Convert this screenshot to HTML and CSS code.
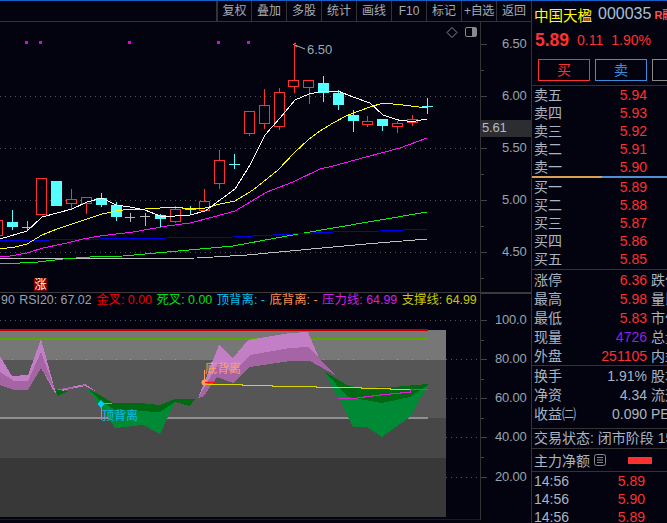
FILE: index.html
```html
<!DOCTYPE html>
<html lang="zh-CN">
<head>
<meta charset="utf-8">
<title>中国天楹 000035</title>
<link rel="stylesheet" href="styles.css">
</head>
<body>
<div class="app">
  <main class="main">
    <nav class="toolbar">
      <span class="tool">复权</span><span class="tool">叠加</span><span class="tool">多股</span><span class="tool">统计</span><span class="tool">画线</span><span class="tool">F10</span><span class="tool">标记</span><span class="tool tight">+自选</span><span class="tool">返回</span>
    </nav>
    <section class="pane price-pane">
      <svg class="plot" viewBox="0 22 480 270" width="480" height="270">
        <g class="grid">
          <line x1="0" x2="480" y1="96.5" y2="96.5"/><line x1="0" x2="480" y1="148.5" y2="148.5"/><line x1="0" x2="480" y1="200.5" y2="200.5"/><line x1="0" x2="480" y1="252.5" y2="252.5"/>
        </g>
        <g class="marks">
          <rect x="25" y="41" width="3" height="3"/><rect x="39" y="41" width="3" height="3"/><rect x="128" y="41" width="3" height="3"/><rect x="217" y="41" width="3" height="3"/><rect x="247" y="41" width="3" height="3"/>
        </g>
        <g class="hi">
          <path d="M293.5 44.5 L297 47 M293.5 44.5 L296 43 M293.5 44.5 L305 49"/>
          <text x="307" y="54">6.50</text>
        </g>
        <g class="ma">
          <polyline class="ma-gray" points="0,259 197,258 247,255 333,247 366,244 427,239"/>
          <polyline class="ma-green" points="0,264 20,263 38,262 63,259 90,257 123,256 167,252 233,246 287,236 333,228 380,220 427,212"/>
          <polyline class="ma-blue" points="0,241 100,239 167,238 233,237 333,232 380,231 427,229"/>
          <polyline class="ma-magenta" points="0,257 10,256 27,253 43,248 67,243 83,239 100,236 133,232 167,226 190,223 213,217 235,211 267,192 293,182 320,169 333,166 366,157 400,148 427,138"/>
        </g>
        <g class="candles">
          <path class="wick-up" d="M71.5 189V210 M86.5 203V214 M175.5 206V223 M204.5 189V211 M219.5 150V189 M249.5 134V136 M264.5 89V129 M279.5 88V130 M294.5 44V93 M309.5 88V104 M367.5 116V127 M397.5 121V133 M412.5 115V126"/>
          <path class="wick-dn" d="M12.5 210V230 M101.5 193V207 M116.5 202V221 M160.5 214V227 M190.5 206V214 M234.5 154V169 M323.5 76V102 M338.5 90V110 M353.5 110V132 M382.5 119V131 M427.5 98V114 M185 209.5H196 M229 164.5H240 M422 106.5H433"/>
          <path class="wick-flat" d="M27.5 221V230 M22 227.5H32 M130.5 213V222 M125 217.5H135 M145.5 213V226 M140 216.5H150"/>
          <rect class="up" x="-4.5" y="220.5" width="7" height="15"/>
          <rect class="up" x="36.5" y="178.5" width="10" height="36"/>
          <rect class="up" x="66.5" y="199.5" width="10" height="4"/>
          <rect class="up" x="81.5" y="197.5" width="10" height="6"/>
          <rect class="up" x="170.5" y="209.5" width="10" height="12"/>
          <rect class="up" x="199.5" y="201.5" width="10" height="9"/>
          <rect class="up" x="214.5" y="160.5" width="10" height="23"/>
          <rect class="up" x="244.5" y="111.5" width="10" height="22"/>
          <rect class="up" x="259.5" y="105.5" width="10" height="18"/>
          <rect class="up" x="274.5" y="92.5" width="10" height="34"/>
          <rect class="up" x="288.5" y="80.5" width="10" height="6"/>
          <rect class="up" x="303.5" y="80.5" width="10" height="7"/>
          <rect class="up" x="362.5" y="121.5" width="10" height="3"/>
          <rect class="up" x="392.5" y="123.5" width="10" height="3"/>
          <rect class="up" x="407.5" y="119.5" width="10" height="3"/>
          <rect class="dn" x="7" y="222" width="11" height="5"/>
          <rect class="dn" x="51" y="181" width="11" height="25"/>
          <rect class="dn" x="96" y="198" width="11" height="7"/>
          <rect class="dn" x="111" y="205" width="11" height="12"/>
          <rect class="dn" x="155" y="215" width="11" height="4"/>
          <rect class="dn" x="318" y="83" width="11" height="10"/>
          <rect class="dn" x="333" y="93" width="11" height="12"/>
          <rect class="dn" x="348" y="115" width="11" height="6"/>
          <rect class="dn" x="377" y="119" width="11" height="7"/>
        </g>
        <g class="ma">
          <polyline class="ma-yellow" points="0,249 15,247 27,244 42,235 57,229 72,224 87,219 102,214 116,211 130,209 145,209 160,208 175,207 190,209 205,208 220,204 235,201 253,190 278,170 295,152 308,140 320,131 333,123 348,115 370,107 383,103 403,105 427,108"/>
          <polyline class="ma-white" points="0,239 27,231 42,217 57,213 72,209 87,202 102,198 116,205 130,207 145,210 160,216 175,216 190,215 205,211 220,200 235,189 250,165 265,135 280,118 295,100 309,94 323,91 338,91 353,97 370,103 383,115 400,120.5 413,121.5 427,119"/>
        </g>
        <g class="badge">
          <rect x="34" y="278" width="13" height="13"/>
          <text x="40.5" y="289">涨</text>
        </g>
        <path class="tool-icon" d="M452 27.5 L457 32.5 L452 37.5 L447 32.5 Z"/>
        <g class="tool-icon">
          <rect x="465.5" y="27.5" width="11" height="9" rx="1.5"/>
          <rect class="solid" x="472" y="28" width="4" height="8"/>
        </g>
      </svg>
      <svg class="axis" viewBox="481 22 50 270" width="50" height="270">
        <g class="ticks">
          <path d="M481 44.5H487 M481 70.5H484 M481 96.5H487 M481 122.5H484 M481 148.5H487 M481 174.5H484 M481 200.5H487 M481 226.5H484 M481 252.5H487 M481 278.5H484"/>
        </g>
        <text x="502" y="48">6.50</text>
        <text x="502" y="100">6.00</text>
        <text x="502" y="152">5.50</text>
        <text x="502" y="204">5.00</text>
        <text x="502" y="256">4.50</text>
        <rect class="cursor-box" x="481" y="120" width="50" height="17"/>
        <text class="cursor-text" x="482" y="132">5.61</text>
      </svg>
    </section>
    <section class="pane ind-pane">
      <div class="ind-left">
        <div class="legend">
          <span class="c-grey">90</span>
          <span class="c-grey">RSI20: 67.02</span>
          <span class="c-red">金叉: 0.00</span>
          <span class="c-green">死叉: 0.00</span>
          <span class="c-cyan">顶背离: -</span>
          <span class="c-orange">底背离: -</span>
          <span class="c-magenta">压力线: 64.99</span>
          <span class="c-olive">支撑线: 64.99</span>
        </div>
        <svg class="plot" viewBox="0 309 480 211" width="480" height="211">
          <g class="grid">
            <line x1="0" x2="480" y1="320.5" y2="320.5"/><line x1="446" x2="480" y1="359.5" y2="359.5"/><line x1="446" x2="480" y1="398.5" y2="398.5"/><line x1="446" x2="480" y1="437.5" y2="437.5"/><line x1="446" x2="480" y1="477.5" y2="477.5"/>
          </g>
          <rect class="band-a" x="0" y="330" width="446" height="30"/>
          <rect class="band-b" x="0" y="360" width="446" height="58"/>
          <rect class="band-c" x="0" y="418" width="446" height="40"/>
          <rect class="band-d" x="0" y="458" width="446" height="59"/>
          <line class="lvl-red" x1="0" x2="428" y1="330" y2="330"/>
          <line class="lvl-green" x1="0" x2="428" y1="339" y2="339"/>
          <line class="lvl-white" x1="0" x2="428" y1="418" y2="418"/>
          <g class="dots">
            <rect x="12" y="359" width="1" height="1"/><rect x="34" y="359" width="1" height="1"/><rect x="56" y="359" width="1" height="1"/><rect x="71" y="359" width="1" height="1"/><rect x="86" y="359" width="1" height="1"/><rect x="101" y="359" width="1" height="1"/><rect x="116" y="359" width="1" height="1"/><rect x="130" y="359" width="1" height="1"/><rect x="145" y="359" width="1" height="1"/><rect x="160" y="359" width="1" height="1"/><rect x="175" y="359" width="1" height="1"/><rect x="190" y="359" width="1" height="1"/><rect x="323" y="359" width="1" height="1"/><rect x="338" y="359" width="1" height="1"/><rect x="353" y="359" width="1" height="1"/><rect x="382" y="359" width="1" height="1"/><rect x="397" y="359" width="1" height="1"/><rect x="412" y="359" width="1" height="1"/><rect x="427" y="359" width="1" height="1"/>
          </g>
          <g class="areas">
            <polygon class="pur-l" points="0,356 12,376 28,375 41,339 55,390 70,387 85,384 97,392 85,386 70,389 55,393 41,368 28,390 14,390 0,385"/>
            <polygon class="pur-l" points="198,398 219,345 233,358 248,340 290,333 308,332 319,358 335,375 310,361 290,361 250,367 233,383 217,377 204,396"/>
            <polygon class="pur-d" points="0,372 14,381 28,381 41,352 55,390 41,368 28,390 14,390 0,385"/>
            <polygon class="pur-d" points="55,390 70,387 85,386 85,384 70,389"/>
            <polygon class="pur-d" points="198,398 219,363 233,373 250,355 290,348 308,347 319,358 335,375 310,361 290,361 250,367 233,383 217,377 204,396"/>
            <polygon class="grn-d" points="55,390 58,396 68,391"/>
            <polygon class="grn-d" points="88,389 100,395 113,403 140,403 160,405 175,399 195,399 190,406 175,402 160,412 115,410 100,400"/>
            <polygon class="grn-m" points="88,390 100,400 115,410 160,412 175,402 190,406 195,399 190,406 175,402 160,434 143,425 115,428 100,405"/>
            <polygon class="grn-d" points="325,372 347,385 360,388 393,387 428,384 428,386 410,397 382,403 348,397"/>
            <polygon class="grn-m" points="325,372 348,397 382,403 410,397 428,385 410,417 382,437 367,427 353,427"/>
          </g>
          <polyline class="sup" points="204,384 242,384 242,385 272,385 272,386 316,386 316,387 361,387 361,388 390,388 390,389 428,389"/>
          <polyline class="res" points="338,398 357,398 357,397 364,397 364,396 372,396 372,395 380,395 380,394 390,394 390,393 400,393 400,392 410,392 410,390 428,389"/>
          <g class="sig-bottom">
            <path class="stem" d="M204.5 370V382"/>
            <circle cx="204.5" cy="382.5" r="3"/>
            <line class="red-tick" x1="205" x2="215" y1="382.5" y2="382.5"/>
            <text x="205" y="373">底背离</text>
          </g>
          <g class="sig-top">
            <path class="stem" d="M101.5 404V420"/>
            <path class="lead" d="M101 403.5H112"/>
            <polygon points="101,400 104.5,404 101,408 97.5,404"/>
            <text x="102" y="420">顶背离</text>
          </g>
          <line class="base" x1="0" x2="480" y1="520" y2="520"/>
        </svg>
      </div>
      <svg class="axis ind-axis" viewBox="481 293 50 227" width="50" height="227">
        <path class="axis-top" d="M481 293.5H531"/>
        <g class="ticks">
          <path d="M481 320.5H487 M481 340.5H484 M481 359.5H487 M481 379.5H484 M481 398.5H487 M481 418.5H484 M481 437.5H487 M481 457.5H484 M481 477.5H487"/>
        </g>
        <text x="495" y="324">100.0</text>
        <text x="495" y="363">80.00</text>
        <text x="495" y="402">60.00</text>
        <text x="495" y="441">40.00</text>
        <text x="495" y="481">20.00</text>
      </svg>
    </section>
  </main>
  <aside class="side">
    <header class="title">
      <span class="name">中国天楹</span><span class="code">000035</span><span class="flag">R融</span>
    </header>
    <div class="quote">
      <b class="last">5.89</b><span>0.11</span><span>1.90%</span>
    </div>
    <div class="trade">
      <span class="btn buy">买</span><span class="btn sell">卖</span><span class="btn idle"></span>
    </div>
    <div class="book">
      <div class="row"><span>卖五</span><em>5.94</em></div>
      <div class="row"><span>卖四</span><em>5.93</em></div>
      <div class="row"><span>卖三</span><em>5.92</em></div>
      <div class="row"><span>卖二</span><em>5.91</em></div>
      <div class="row"><span>卖一</span><em>5.90</em></div>
    </div>
    <div class="split"><i class="split-a"></i><i class="split-b"></i></div>
    <div class="book book-end">
      <div class="row"><span>买一</span><em>5.89</em></div>
      <div class="row"><span>买二</span><em>5.88</em></div>
      <div class="row"><span>买三</span><em>5.87</em></div>
      <div class="row"><span>买四</span><em>5.86</em></div>
      <div class="row"><span>买五</span><em>5.85</em></div>
    </div>
    <div class="stats">
      <div class="row tall"><span>涨停</span><em>6.36</em><span class="extra">跌停</span></div>
      <div class="row tall"><span>最高</span><em>5.98</em><span class="extra">量比</span></div>
      <div class="row tall"><span>最低</span><em>5.83</em><span class="extra">市值</span></div>
      <div class="row tall"><span>现量</span><em class="purple">4726</em><span class="extra">总量</span></div>
      <div class="row tall"><span>外盘</span><em>251105</em><span class="extra">内盘</span></div>
    </div>
    <div class="stats stats-pad">
      <div class="row tall"><span>换手</span><em class="plain">1.91%</em><span class="extra">股本</span></div>
      <div class="row tall"><span>净资</span><em class="plain">4.34</em><span class="extra">流通</span></div>
      <div class="row tall"><span>收益㈡</span><em class="plain">0.090</em><span class="extra">PE</span></div>
    </div>
    <div class="status">交易状态: 闭市阶段 15:00</div>
    <div class="flow">
      <span>主力净额</span>
      <svg class="list-icon" viewBox="0 0 12 12" width="12" height="12"><rect x="0.5" y="0.5" width="11" height="11" rx="2"/><path d="M3 3.5H9 M3 6H9 M3 8.5H9"/></svg>
      <i class="flow-bar"></i>
    </div>
    <div class="ticks-list">
      <div class="row tick"><span>14:56</span><em>5.89</em></div>
      <div class="row tick"><span>14:56</span><em>5.90</em></div>
      <div class="row tick"><span>14:56</span><em>5.89</em></div>
    </div>
  </aside>
</div>
</body>
</html>
```
FILE: styles.css
```css
* { box-sizing: border-box; }
html, body { margin: 0; padding: 0; height: 100%; }
body {
  background: #03030f;
  color: #a9b5c2;
  font-family: "Liberation Sans", "Noto Sans CJK SC", sans-serif;
  overflow: hidden;
}
.app { display: flex; width: 667px; height: 523px; border-top: 1px solid #1560c8; overflow: hidden; }
.main { width: 531px; flex: none; display: flex; flex-direction: column; }

.toolbar { height: 21px; flex: none; display: flex; justify-content: flex-end; border-bottom: 1px solid #333; }
.tool { width: 35px; height: 20px; border-left: 1px solid #333; text-align: center; font-size: 12px; line-height: 20px; color: #a4acb4; white-space: nowrap; overflow: hidden; }
.tool.tight { letter-spacing: -0.4px; }
.tool:first-child { border-left: 2px solid #333; }

.pane { display: flex; flex: none; }
.plot, .axis { display: block; flex: none; }
.price-pane { height: 271px; border-bottom: 1px solid #3a3a3a; }
.axis { border-left: 1px solid #333; width: 51px; }
.axis text { fill: #98a4b0; font-size: 13px; letter-spacing: -0.2px; }
.ticks path { stroke: #444; fill: none; }
.cursor-box { fill: #2b2d31; }
.axis .cursor-text { fill: #b4bcc4; }
.axis-top { stroke: #3a3a3a; }

.grid line { stroke: #555; stroke-dasharray: 1 4; }
.marks rect { fill: #e000e0; }
.hi path { stroke: #b0b0b0; fill: none; }
.hi text { fill: #98a8b8; font-size: 13px; }

.ma polyline { fill: none; stroke-width: 1; shape-rendering: crispEdges; }
.ma .ma-white { stroke: #fff; }
.ma .ma-yellow { stroke: #ffff00; }
.ma .ma-magenta { stroke: #ff10ff; }
.ma .ma-blue { stroke: #0000f0; }
.ma .ma-green { stroke: #10f010; }
.ma .ma-gray { stroke: #c0c0c0; }

.candles { shape-rendering: crispEdges; }
.up { fill: #03030f; stroke: #ff3030; }
.dn { fill: #54ffff; }
.wick-up { stroke: #ff3030; fill: none; }
.wick-dn { stroke: #54ffff; fill: none; }
.wick-flat { stroke: #b8b8b8; fill: none; }

.badge rect { fill: #800000; }
.badge text { fill: #fff; font-size: 12px; text-anchor: middle; }
.tool-icon { fill: none; stroke: #8a8a8a; }
.tool-icon .solid { fill: #8a8a8a; stroke: none; }

.ind-pane { height: 230px; }
.ind-left { width: 480px; flex: none; }
.legend { height: 16px; display: flex; gap: 4.5px; padding-left: 1px; font-size: 12.4px; line-height: 15px; white-space: nowrap; overflow: hidden; }
.c-grey { color: #98a4b0; }
.c-red { color: #f00000; }
.c-green { color: #00e010; }
.c-cyan { color: #00c0f0; }
.c-orange { color: #ff9050; }
.c-magenta { color: #d020e0; }
.c-olive { color: #c8c800; }

.band-a { fill: #777; }
.band-b { fill: #565656; }
.band-c { fill: #474747; }
.band-d { fill: #383838; }
.lvl-red { stroke: #c00000; stroke-width: 2; }
.lvl-green { stroke: #58a800; stroke-width: 2; }
.lvl-white { stroke: #909090; stroke-width: 2; }
.dots rect { fill: #20d0d0; }
.areas { shape-rendering: crispEdges; }
.pur-l { fill: #c27fc6; }
.pur-d { fill: #a564a4; }
.grn-d { fill: #006a12; }
.grn-m { fill: #008a35; }
.sup { fill: none; stroke: #d8d800; stroke-width: 1; shape-rendering: crispEdges; }
.res { fill: none; stroke: #e020d0; stroke-width: 1; shape-rendering: crispEdges; }
.sig-bottom circle { fill: #ff9c60; }
.sig-bottom .stem { stroke: #ff9c60; fill: none; }
.sig-bottom text { fill: #ff9c60; font-size: 12px; }
.red-tick { stroke: #ff1010; stroke-width: 1.5; }
.sig-top polygon { fill: #00d0ff; }
.sig-top .stem { stroke: #20b8ff; fill: none; }
.sig-top .lead { stroke: #30e030; fill: none; }
.sig-top text { fill: #10b8e8; font-size: 12px; }
.base { stroke: #333; }

.side { width: 136px; flex: none; border-left: 1px solid #333; font-size: 14px; overflow: hidden; }
.title { height: 26px; display: flex; align-items: center; gap: 6px; padding-left: 2px; white-space: nowrap; }
.name { color: #ffff00; font-size: 14.5px; }
.code { color: #a8c0d8; font-size: 16px; }
.flag { color: #ff5050; font-size: 11px; font-weight: bold; margin-left: -3px; }
.quote { height: 26px; display: flex; align-items: center; gap: 8px; padding-left: 3px; color: #ff3030; white-space: nowrap; }
.last { font-size: 17.5px; }
.trade { height: 33px; display: flex; gap: 5px; padding: 6px 0 0 6px; border-bottom: 1px solid #333; }
.btn { width: 52px; height: 22px; flex: none; border: 1px solid; text-align: center; font-size: 14px; line-height: 20px; }
.buy { color: #ff3030; border-color: #ff3030; }
.sell { color: #3a8ee0; border-color: #3a8ee0; }
.idle { border-color: #888; }

.row { display: flex; height: 18px; line-height: 18px; padding: 0 20px 0 2px; white-space: nowrap; }
.row em { flex: 1; text-align: right; font-style: normal; color: #ff3030; }
.row .extra { width: 16px; flex: none; margin: 0 -20px 0 4px; overflow: hidden; }
.row.tall { height: 19px; line-height: 19px; }
.row em.purple { color: #9020e0; }
.row em.plain { color: #a9b5c2; }
.book-end { padding-bottom: 1px; border-bottom: 1px solid #333; height: 92px; }
.split { display: flex; height: 2px; }
.split-a { width: 70px; background: #d8a050; }
.split-b { flex: 1; background: #5090d0; }
.stats { border-bottom: 1px solid #333; height: 96px; padding-top: 0.5px; }
.stats-pad { height: 63px; }
.status { height: 20px; line-height: 19px; padding-left: 2px; white-space: nowrap; border-bottom: 1px solid #333; }
.flow { height: 23px; display: flex; align-items: center; padding-left: 2px; border-bottom: 1px solid #333; position: relative; }
.list-icon { margin-left: 4px; fill: none; stroke: #8a8a8a; }
.flow-bar { width: 24px; height: 7px; background: #ff3030; margin-left: 22px; }
.row.tick { padding-right: 22px; }
```
